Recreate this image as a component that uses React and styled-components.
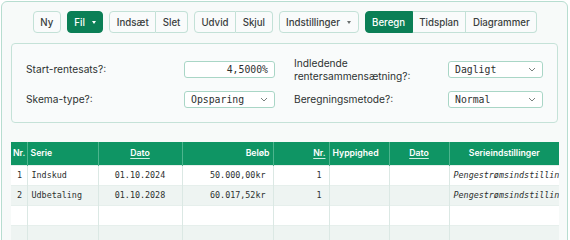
import React from "react";
import styled, { createGlobalStyle } from "styled-components";

const GlobalStyle = createGlobalStyle`
  html, body {
    margin: 0;
    padding: 0;
    background: #ffffff;
    font-family: Inter, "Noto Sans", "Liberation Sans", sans-serif;
  }
  * { box-sizing: border-box; }
`;

const green = "#0f9564";
const darkGreen = "#0b7f56";
const line = "#b7ddd0";
const mono = `"DejaVu Sans Mono", "Liberation Mono", monospace`;

const Card = styled.div`
  margin: 1px 0 0 1px;
  width: 567px;
  height: 260px;
  border: 1px solid ${line};
  border-radius: 6px;
  background: #f7faf9;
  padding: 9px 9px 0;
  overflow: hidden;
`;

const Toolbar = styled.div`
  display: flex;
  justify-content: center;
  gap: 6px;
  padding-left: 1px;
`;

const Group = styled.div`
  display: flex;
  & > button + button {
    border-left: none;
    border-top-left-radius: 0;
    border-bottom-left-radius: 0;
  }
  & > button:not(:last-child) {
    border-top-right-radius: 0;
    border-bottom-right-radius: 0;
  }
`;

const Button = styled.button`
  height: 22px;
  padding: 0 6.5px;
  display: flex;
  align-items: center;
  gap: 7px;
  font-family: inherit;
  font-size: 9.7px;
  font-weight: 500;
  color: ${(p) => (p.$primary ? "#ffffff" : "#3a3f3e")};
  background: ${(p) => (p.$primary ? darkGreen : "#f9fbfb")};
  border: 1px solid ${(p) => (p.$primary ? darkGreen : "#c3e1d7")};
  border-radius: 4px;
  cursor: pointer;
`;

const Caret = styled.span`
  width: 0;
  height: 0;
  border-left: 2.5px solid transparent;
  border-right: 2.5px solid transparent;
  border-top: 3px solid ${(p) => (p.$light ? "#ffffff" : "#6b706f")};
`;

const Settings = styled.div`
  margin-top: 10px;
  border: 1px solid #c5e2d8;
  border-radius: 4px;
  background: #f9fbfb;
  padding: 13px 14px 14px;
  display: grid;
  grid-template-columns: 158px 91px 19px 154px 95px;
  row-gap: 9px;
  align-items: center;
`;

const Label = styled.div`
  font-size: 10.2px;
  line-height: 12.5px;
  color: #2d3231;
  grid-column: ${(p) => p.$col};
`;

const Field = styled.div`
  grid-column: ${(p) => p.$col};
  height: 17px;
  border: 1px solid #a9d6c6;
  border-radius: 3px;
  background: #ffffff;
  font-family: ${mono};
  font-size: 9.8px;
  color: #2c302f;
  display: flex;
  align-items: center;
  justify-content: ${(p) => (p.$right ? "flex-end" : "space-between")};
  padding: 0 6px;
`;

const Chevron = () => (
  <svg width="8" height="5" viewBox="0 0 8 5">
    <path d="M1 1l3 3 3-3" fill="none" stroke="#7a807e" strokeWidth="1" />
  </svg>
);

const TableWrap = styled.div`
  margin-top: 19px;
  width: 548px;
  overflow: hidden;
  background: #ffffff;
`;

const Table = styled.table`
  border-collapse: collapse;
  table-layout: fixed;
  width: 548px;
`;

const Th = styled.th`
  height: 23px;
  background: ${green};
  color: #ffffff;
  font-size: 8.7px;
  font-weight: 600;
  padding: 0 3px;
  text-align: ${(p) => p.$align || "left"};
  border-left: 1px solid #4db58e;
  white-space: nowrap;
  &:first-child { border-left: none; padding: 0 2px; }
  text-decoration: ${(p) => (p.$sort ? "underline" : "none")};
  text-decoration-color: #cfeee2;
  text-underline-offset: 2px;
  text-decoration-thickness: 1px;
`;

const Tr = styled.tr`
  background: ${(p) => (p.$alt ? "#eef4f2" : "#ffffff")};
`;

const Td = styled.td`
  height: 20px;
  border-left: 1px solid #dbe8e4;
  border-top: 1px solid #e6efec;
  font-family: ${mono};
  font-size: 8.4px;
  color: #2c302f;
  padding: 0 ${(p) => (p.$align === "right" ? "7px" : "4px")};
  text-align: ${(p) => p.$align || "left"};
  white-space: nowrap;
  overflow: hidden;
  font-style: ${(p) => (p.$italic ? "italic" : "normal")};
  &:first-child { border-left: none; padding: 0 4px 0 6px; }
`;

const rows = [
  ["1", "Indskud", "01.10.2024", "50.000,00kr", "1", "", "", "Pengestrømsindstillinger"],
  ["2", "Udbetaling", "01.10.2028", "60.017,52kr", "1", "", "", "Pengestrømsindstillinger"],
  ["", "", "", "", "", "", "", ""],
  ["", "", "", "", "", "", "", ""],
];

const cols = [16, 71, 84, 91, 56, 60, 60, 110];
const aligns = ["left", "left", "center", "right", "right", "left", "center", "left"];

export default function App() {
  return (
    <>
      <GlobalStyle />
      <Card>
        <Toolbar>
          <Button>Ny</Button>
          <Button $primary>
            Fil <Caret $light />
          </Button>
          <Group>
            <Button>Indsæt</Button>
            <Button>Slet</Button>
          </Group>
          <Group>
            <Button>Udvid</Button>
            <Button>Skjul</Button>
          </Group>
          <Button>
            Indstillinger <Caret />
          </Button>
          <Group>
            <Button $primary>Beregn</Button>
            <Button>Tidsplan</Button>
            <Button>Diagrammer</Button>
          </Group>
        </Toolbar>

        <Settings>
          <Label $col={1}>Start-rentesats?:</Label>
          <Field $col={2} $right>4,5000%</Field>
          <Label $col={4}>
            Indledende
            <br />
            rentersammensætning?:
          </Label>
          <Field $col={5}>
            Dagligt <Chevron />
          </Field>
          <Label $col={1}>Skema-type?:</Label>
          <Field $col={2}>
            Opsparing <Chevron />
          </Field>
          <Label $col={4}>Beregningsmetode?:</Label>
          <Field $col={5}>
            Normal <Chevron />
          </Field>
        </Settings>

        <TableWrap>
          <Table>
            <colgroup>
              {cols.map((w, i) => (
                <col key={i} style={{ width: w }} />
              ))}
            </colgroup>
            <thead>
              <tr>
                <Th>Nr.</Th>
                <Th>Serie</Th>
                <Th $align="center" $sort>Dato</Th>
                <Th $align="right">Beløb</Th>
                <Th $align="right" $sort>Nr.</Th>
                <Th>Hyppighed</Th>
                <Th $align="center" $sort>Dato</Th>
                <Th $align="center">Serieindstillinger</Th>
              </tr>
            </thead>
            <tbody>
              {rows.map((r, i) => (
                <Tr key={i} $alt={i % 2 === 1}>
                  {r.map((c, j) => (
                    <Td key={j} $align={aligns[j]} $italic={j === 7}>
                      {c}
                    </Td>
                  ))}
                </Tr>
              ))}
            </tbody>
          </Table>
        </TableWrap>
      </Card>
    </>
  );
}
